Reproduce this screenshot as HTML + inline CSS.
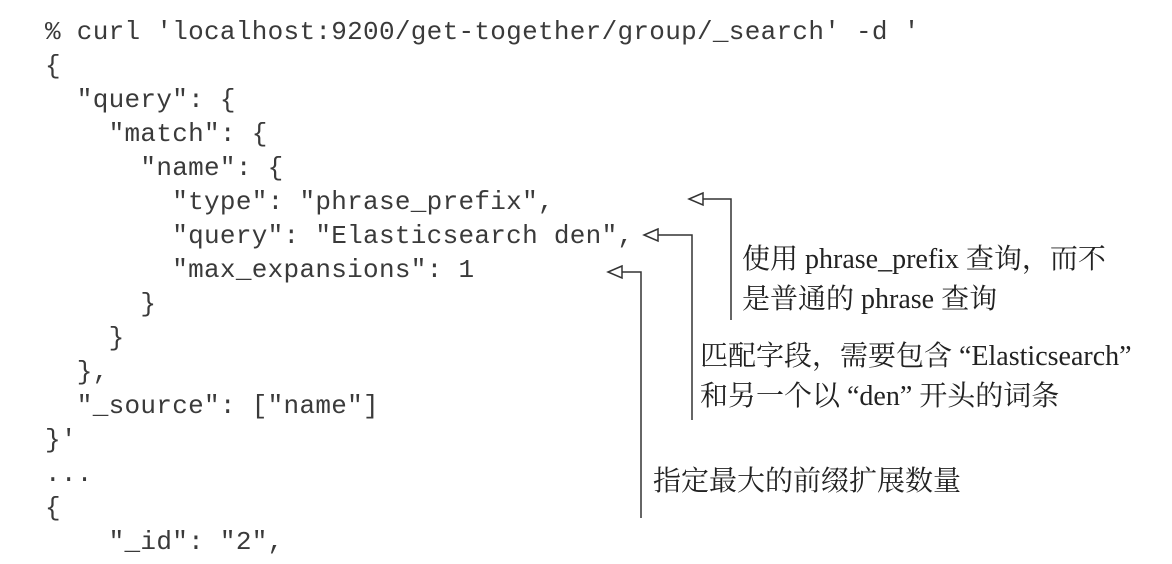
<!DOCTYPE html>
<html><head><meta charset="utf-8"><style>
html,body{margin:0;padding:0;background:#fff;width:1172px;height:564px;overflow:hidden;position:relative}
pre{position:absolute;left:45px;top:15px;margin:0;font-family:"Liberation Mono",monospace;font-size:26px;line-height:34px;color:#3a3a3a;letter-spacing:0.3px}
.a{position:absolute;font-family:"Liberation Serif","Noto Serif CJK SC",serif;font-size:28px;line-height:40px;color:#222;white-space:nowrap}
svg{position:absolute;left:0;top:0}
</style></head><body>
<pre>% curl 'localhost:9200/get-together/group/_search' -d '
{
  "query": {
    "match": {
      "name": {
        "type": "phrase_prefix",
        "query": "Elasticsearch den",
        "max_expansions": 1
      }
    }
  },
  "_source": ["name"]
}'
...
{
    "_id": "2",</pre>
<svg width="1172" height="564" fill="none" stroke="#333" stroke-width="1.5">
<path d="M703 193 L689 199 L703 205 Z"/>
<path d="M703 199 H731 V320"/>
<path d="M658 229 L644 235 L658 241 Z"/>
<path d="M658 235 H692 V420"/>
<path d="M622 266 L608 272 L622 278 Z"/>
<path d="M622 272 H641 V518"/>
</svg>
<div class="a" style="left:742px;top:240px">使用 phrase_prefix 查询，而不<br>是普通的 phrase 查询</div>
<div class="a" style="left:700px;top:337px">匹配字段，需要包含 “Elasticsearch”<br>和另一个以 “den” 开头的词条</div>
<div class="a" style="left:653px;top:462px">指定最大的前缀扩展数量</div>
</body></html>
